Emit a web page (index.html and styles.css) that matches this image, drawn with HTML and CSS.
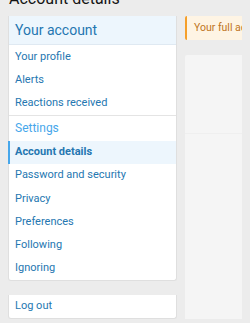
FILE: index.html
```html
<!DOCTYPE html>
<html lang="en">

<head>
    <meta charset="utf-8">
    <title>Account details</title>
    <link rel="stylesheet" href="styles.css">
</head>

<body>
    <h1 class="page-title">Account details</h1>

    <div class="page-body">
        <aside class="sidebar">
            <nav class="block">
                <h3 class="block-header">Your account</h3>
                <a class="nav-item" href="#">Your profile</a>
                <a class="nav-item" href="#">Alerts</a>
                <a class="nav-item" href="#">Reactions received</a>
                <div class="nav-group">
                    <h4 class="nav-heading">Settings</h4>
                    <a class="nav-item selected" href="#">Account details</a>
                    <a class="nav-item" href="#">Password and security</a>
                    <a class="nav-item" href="#">Privacy</a>
                    <a class="nav-item" href="#">Preferences</a>
                    <a class="nav-item" href="#">Following</a>
                    <a class="nav-item" href="#">Ignoring</a>
                </div>
            </nav>

            <div class="block">
                <a class="nav-item" href="#">Log out</a>
            </div>
        </aside>

        <main class="content">
            <div class="notice">Your full account details are shown below</div>
            <div class="form-block">
                <div class="form-row"></div>
            </div>
        </main>
    </div>
</body>

</html>
```

FILE: styles.css
```css
html {
    overflow: hidden;
}

body {
    margin: 0;
    padding: 0 8px;
    height: 323px;
    background-color: #ececec;
    font-family: Roboto, "Liberation Sans", sans-serif;
    font-size: 11px;
    overflow: hidden;
}

.page-title {
    margin: -11px 0 0 1px;
    font-size: 16px;
    font-weight: 400;
    line-height: 20px;
    color: #141414;
}

.page-body {
    display: flex;
    gap: 8px;
    margin-top: 7px;
}

.sidebar {
    width: 169px;
    flex-shrink: 0;
    display: flex;
    flex-direction: column;
    gap: 14px;
}

.block {
    background-color: #fff;
    border: 1px solid #dfdfdf;
    border-top: 0;
    border-radius: 0 0 3px 3px;
    display: flex;
    flex-direction: column;
}

.block-header {
    margin: 0;
    padding: 0 6px;
    height: 28px;
    line-height: 28px;
    font-size: 14px;
    font-weight: 400;
    color: #2577b1;
    background-color: #edf6fd;
    border-bottom: 1px solid #dfe9f2;
}

.nav-item {
    display: block;
    padding: 2.6px 5px;
    line-height: 18px;
    color: #2577b1;
    text-decoration: none;
    border-left: 2px solid transparent;
    margin-left: -1px;
}

.nav-item.selected {
    font-weight: 700;
    background-color: #edf6fd;
    border-left-color: #47a7eb;
}

.nav-group {
    border-top: 1px solid #e4e4e4;
    display: flex;
    flex-direction: column;
}

.nav-heading {
    margin: 0;
    padding: 3px 6px;
    line-height: 19px;
    font-size: 12px;
    font-weight: 400;
    color: #47a7eb;
}

.content {
    flex: 1;
    min-width: 0;
    display: flex;
    flex-direction: column;
    gap: 15px;
}

.notice {
    white-space: nowrap;
    overflow: hidden;
    height: 24px;
    line-height: 24px;
    padding: 0 7px;
    font-size: 10.5px;
    color: #c0741d;
    background-color: #fef4e4;
    border-left: 2px solid #f59f2a;
    border-radius: 2px 0 0 2px;
}

.form-block {
    flex: 1;
    height: 268px;
    background-color: #f5f5f5;
    border-radius: 2px 0 0 0;
}

.form-row {
    height: 78px;
    border-bottom: 1px solid #efefef;
}
```
